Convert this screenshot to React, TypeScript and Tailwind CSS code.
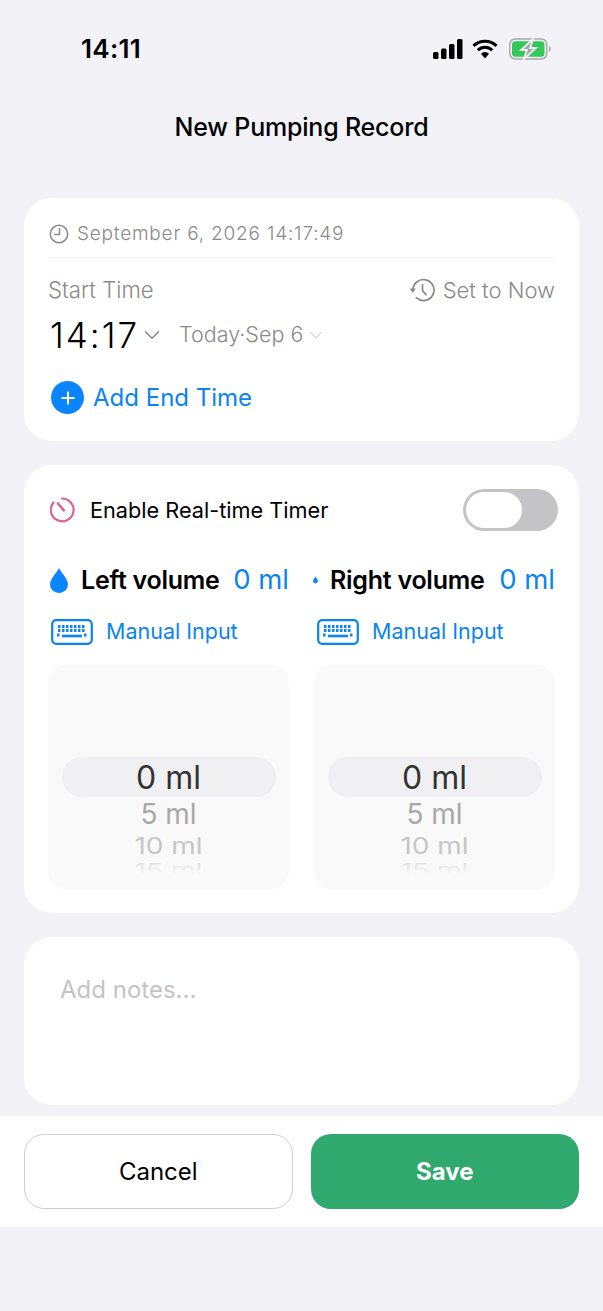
import { ChevronDown, Plus } from 'lucide-react';

function StatusIcons() {
  return (
    <div className="flex items-center gap-[9px]">
      <svg width="30" height="20" viewBox="0 0 30 20">
        <rect x="0" y="13" width="5.500" height="7" rx="1.500" fill="#000" />
        <rect x="8" y="9.500" width="5.500" height="10.500" rx="1.500" fill="#000" />
        <rect x="16" y="5" width="5.500" height="15" rx="1.500" fill="#000" />
        <rect x="24" y="0" width="5.500" height="20" rx="1.500" fill="#000" />
      </svg>
      <svg width="26" height="20" viewBox="0 0 26 20" fill="none">
        <path d="M1.500 6.800a16.500 16.500 0 0 1 23 0" stroke="#000" strokeWidth="3" />
        <path d="M5.800 11.200a10.300 10.300 0 0 1 14.400 0" stroke="#000" strokeWidth="3" />
        <path d="M9 14.800a5.600 5.600 0 0 1 8 0L13 19.500z" fill="#000" />
      </svg>
      <svg width="42" height="22" viewBox="0 0 42 22" fill="none" className="ml-[2px]">
        <rect x="0.800" y="1" width="37" height="20" rx="5.500" stroke="#a9abad" strokeWidth="1.500" />
        <rect x="3" y="3.200" width="32.500" height="15.600" rx="3.500" fill="#34c759" />
        <path d="M40 8v6c1.200-.5 1.700-1.700 1.700-3s-.5-2.500-1.700-3z" fill="#a9abad" />
        <path d="M24.500 0.500 12 12h6L14.500 21.500 27 10h-6z" fill="#a3a5a8" stroke="#f2f2f7" strokeWidth="1.800" />
      </svg>
    </div>
  );
}

function ClockIcon() {
  return (
    <svg width="20" height="20" viewBox="0 0 20 20" fill="none" stroke="#8a8a8a" strokeWidth="1.500">
      <circle cx="10" cy="10" r="8.700" />
      <path d="M10.500 4.500v6H5.800" strokeLinecap="round" strokeLinejoin="round" />
    </svg>
  );
}

function HistoryIcon() {
  return (
    <svg width="26" height="24" viewBox="0 0 26 24" fill="none" stroke="#8a8a8a" strokeWidth="1.700">
      <path d="M4 12.500a10.500 10.500 0 1 1 3.300 7.200" strokeLinecap="round" />
      <path d="M0.800 10.500h6L3.800 15z" fill="#8a8a8a" stroke="none" />
      <path d="M13.500 6.500v6.200l3.700 4" strokeLinecap="round" strokeLinejoin="round" />
    </svg>
  );
}

function TimerIcon() {
  return (
    <svg width="26" height="26" viewBox="0 0 26 26" fill="none" stroke="#d6668f" strokeWidth="2.200">
      <path d="M12 1.500a11.400 11.400 0 1 1-8.500 4" strokeLinecap="round" />
      <path d="M8 6.500l5.800 6.800" strokeLinecap="round" strokeWidth="2.600" />
    </svg>
  );
}

function KeyboardIcon() {
  const keys = [
    'M7 7.500h2.500M11 7.500h2.500M15 7.500h2.500M19 7.500h2.500M23 7.500h2.500M27 7.500h2.500M31 7.500h2.500',
    'M7 11.500h2.500M11 11.500h2.500M15 11.500h2.500M19 11.500h2.500M23 11.500h2.500M27 11.500h2.500M31 11.500h2.500',
    'M6 16h2.500M33 16h2.500',
  ];
  return (
    <svg width="42" height="26" viewBox="0 0 42 26" fill="none" stroke="#0a84f0">
      <rect x="1.200" y="1.200" width="39.600" height="23.600" rx="4" strokeWidth="2.200" />
      {keys.map((d) => (
        <path key={d} d={d} strokeWidth="2.800" />
      ))}
      <path d="M11 17h20" strokeWidth="2.600" />
    </svg>
  );
}

function Drop({ small }: { small?: boolean }) {
  const size = small ? 'w-[5px] h-[8px]' : 'w-[18px] h-[25px]';
  return (
    <svg viewBox="0 0 18 25" className={size}>
      <path d="M9 0C6.500 5 0 11 0 16.500a9 8.500 0 0 0 18 0C18 11 11.500 5 9 0z" fill="#0a84ff" />
    </svg>
  );
}

function Picker() {
  return (
    <div className="relative flex h-[224px] w-[241px] flex-col items-center overflow-hidden rounded-[18px] bg-[#f9f9fa]">
      <div className="mt-[92px] flex h-[40px] w-[214px] items-center justify-center rounded-full bg-[#f0f0f2] pt-[1px] text-[32px] leading-none text-[#333]">
        0 ml
      </div>
      <div className="h-[34px] text-[28px] leading-[34px] text-[#a8a8a8]">5 ml</div>
      <div className="mt-[3px] h-[25px] origin-top scale-y-[0.82] text-[28px] leading-[28px] text-[#c6c6c6]">10 ml</div>
      <div className="mt-[3px] h-[20px] origin-top scale-y-[0.6] text-[28px] leading-[28px] text-[#d8d8d8]">15 ml</div>
      <div className="absolute inset-x-0 bottom-0 h-[30px] bg-gradient-to-b from-transparent to-[#f9f9fa] to-50%" />
    </div>
  );
}

function VolumeColumn({ label, small }: { label: string; small?: boolean }) {
  return (
    <div className="flex w-[241px] flex-col">
      <div className="flex h-[30px] items-center justify-between">
        <div className="flex items-center">
          <div className={small ? 'ml-[-1px] mr-[12px] flex' : 'ml-[2px] mr-[13px] flex'}>
            <Drop small={small} />
          </div>
          <span className="text-[25px] font-semibold leading-none tracking-[-0.25px] text-black">{label}</span>
        </div>
        <span className="text-[27.500px] leading-none text-[#0a84f0]">0 ml</span>
      </div>
      <div className="mt-[21px] flex h-[30px] items-center pl-[3px] pt-[1px]">
        <KeyboardIcon />
        <span className="ml-[13px] text-[21.500px] leading-none text-[#0a84f0]">Manual Input</span>
      </div>
      <div className="mt-[19px]">
        <Picker />
      </div>
    </div>
  );
}

export default function App() {
  return (
    <div className="flex h-[1311px] w-[603px] flex-col overflow-hidden bg-[#f2f2f7] font-['Inter','Liberation_Sans',sans-serif]">
      <div className="flex h-[98px] items-center justify-between pl-[81px] pr-[52px]">
        <span className="text-[26px] font-semibold leading-none tracking-[0.3px] text-black">14:11</span>
        <StatusIcons />
      </div>
      <h1 className="text-center text-[25px] font-medium leading-[58px] tracking-[-0.2px] text-black">New Pumping Record</h1>

      <div className="mx-[24px] mt-[42px] flex flex-col gap-[24px]">
        <section className="flex h-[243px] flex-col rounded-[28px] bg-white px-[24px]">
          <div className="flex h-[60px] shrink-0 items-center gap-[8px] border-b border-[#f3f3f5] pl-[1px] pt-[12px]">
            <ClockIcon />
            <span className="text-[19px] font-light leading-none tracking-[0.8px] text-[#8a8a8a]">September 6, 2026 14:17:49</span>
          </div>
          <div className="mt-[18px] flex h-[28px] items-center justify-between">
            <span className="text-[22.200px] font-light leading-none text-[#8a8a8a]">Start Time</span>
            <div className="flex items-center gap-[8px]">
              <HistoryIcon />
              <span className="text-[22px] font-light leading-none text-[#8a8a8a]">Set to Now</span>
            </div>
          </div>
          <div className="mt-[11px] flex h-[40px] items-center pl-[2px]">
            <span className="text-[35px] font-light leading-none tracking-[2px] text-black">14:17</span>
            <ChevronDown size={26} strokeWidth={1} className="text-[#777]" />
            <span className="ml-[14px] text-[21.500px] font-light leading-none text-[#8a8a8a]">Today·Sep 6</span>
            <ChevronDown size={22} strokeWidth={1} className="ml-[2px] text-[#bbb]" />
          </div>
          <div className="mt-[26px] flex items-center pl-[3px]">
            <div className="flex h-[33px] w-[33px] items-center justify-center rounded-full bg-[#0a84ff]">
              <Plus size={20} strokeWidth={2.400} className="text-white" />
            </div>
            <span className="ml-[9px] pt-[1px] text-[24px] leading-none text-[#0a84f0]">Add End Time</span>
          </div>
        </section>

        <section className="h-[448px] rounded-[28px] bg-white px-[24px]">
          <div className="flex h-[66px] items-center justify-between pt-[24px]">
            <div className="flex items-center gap-[14px] pl-[2px]">
              <TimerIcon />
              <span className="pt-[1px] text-[21.700px] leading-none text-black">Enable Real-time Timer</span>
            </div>
            <div className="mr-[-3px] flex h-[42px] w-[95px] items-center rounded-full bg-[#c4c4c6] p-[3px]">
              <div className="h-[36px] w-[56px] rounded-full bg-white" />
            </div>
          </div>
          <div className="mt-[34px] flex gap-[25px]">
            <VolumeColumn label="Left volume" />
            <VolumeColumn label="Right volume" small />
          </div>
        </section>

        <section className="h-[168px] rounded-[28px] bg-white px-[36px] pt-[39px]">
          <p className="text-[24px] leading-[28px] text-[#c4c4c7]">Add notes...</p>
        </section>
      </div>

      <div className="mt-[11px] flex h-[111px] gap-[18px] bg-white px-[24px] pt-[18px]">
        <button className="h-[75px] w-[269px] rounded-[20px] border border-[#cfcfd2] bg-white text-[24px] text-black">Cancel</button>
        <button className="h-[75px] w-[269px] rounded-[20px] bg-[#30a96f] text-[24px] font-bold text-white">Save</button>
      </div>
    </div>
  );
}
